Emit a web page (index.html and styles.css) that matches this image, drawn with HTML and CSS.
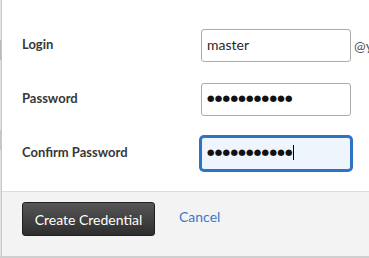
FILE: index.html
```html
<!DOCTYPE html>
<html>
<head>
<meta charset="utf-8">
<link rel="stylesheet" href="styles.css">
</head>
<body>
<div class="page">
  <div class="edge"></div>
  <div class="dialog">
    <form class="form">
      <div class="row">
        <label class="label">Login</label>
        <div class="field">master</div>
        <span class="domain">@yandex.ru</span>
      </div>
      <div class="row">
        <label class="label">Password</label>
        <div class="field dots">●●●●●●●●●●●</div>
      </div>
      <div class="row">
        <label class="label">Confirm Password</label>
        <div class="field dots focus">●●●●●●●●●●●<span class="caret"></span></div>
      </div>
    </form>
    <div class="footer">
      <button class="btn" type="button">Create Credential</button>
      <a class="cancel" href="#">Cancel</a>
    </div>
  </div>
</div>
</body>
</html>
```
FILE: styles.css
```css
html, body {
  margin: 0;
  padding: 0;
}
body {
  width: 369px;
  height: 258px;
  overflow: hidden;
  background: #cfcfcf;
  font-family: Lato, "Liberation Sans", sans-serif;
}
.page {
  display: flex;
  height: 256px;
}
.edge {
  width: 1px;
  flex: none;
  background: linear-gradient(#e6e6e6 0 40px, #b9b9b9 40px 60px, #e2e2e2 60px 130px, #c8c8c8 130px 150px, #e2e2e2 150px);
}
.dialog {
  flex: 1;
  display: flex;
  flex-direction: column;
  background: #fff;
  border-left: 1px solid #c8c8c8;
  overflow: hidden;
}
.form {
  display: flex;
  flex-direction: column;
  gap: 21px;
  padding: 29px 0 0 20px;
  height: 191px;
  box-sizing: border-box;
  margin: 0;
}
.row {
  display: flex;
  align-items: center;
  height: 33px;
}
.label {
  width: 179px;
  flex: none;
  font-weight: 700;
  font-size: 13px;
  color: #383838;
  padding-bottom: 4px;
}
.field {
  width: 150px;
  height: 33px;
  box-sizing: border-box;
  flex: none;
  border: 1px solid #ababab;
  border-radius: 3px;
  padding: 0 5px;
  font-size: 14px;
  line-height: 29px;
  color: #2a1f2a;
  background: #fff;
  white-space: nowrap;
}
.dots {
  font-family: "DejaVu Sans", sans-serif;
  font-size: 8.6px;
  letter-spacing: 0.3px;
  color: #111;
}
.focus {
  border-color: #2c72c5;
  box-shadow: 0 0 0 2px #2c72c5;
  background: #eff5fd;
}
.caret {
  display: inline-block;
  width: 1px;
  height: 15px;
  background: #000;
  vertical-align: middle;
  margin-left: 0;
}
.domain {
  margin-left: 3px;
  font-size: 14px;
  color: #555;
  white-space: nowrap;
}
.footer {
  flex: 1;
  display: flex;
  align-items: flex-start;
  gap: 24px;
  padding: 10px 0 0 20px;
  background: #f3f3f3;
  border-top: 1px solid #dcdcdc;
}
.btn {
  width: 133px;
  height: 34px;
  border: 1px solid #1f1f1f;
  border-radius: 3px;
  background: linear-gradient(#565656, #2e2e2e);
  color: #fff;
  font-family: inherit;
  font-size: 14px;
  padding: 0;
}
.cancel {
  margin-top: 6px;
  font-size: 14px;
  color: #3a78c9;
  text-decoration: none;
}
```
